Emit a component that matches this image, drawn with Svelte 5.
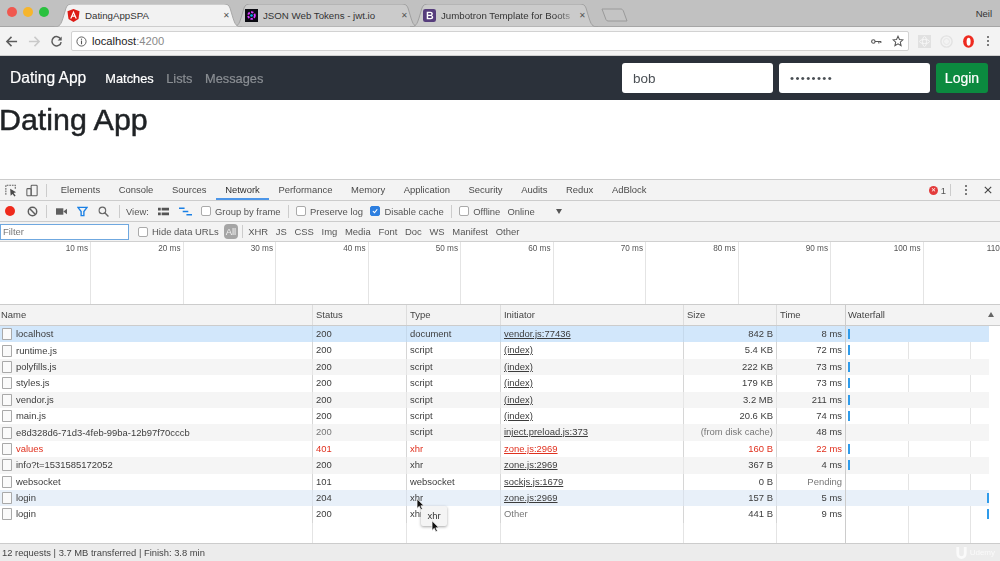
<script>
  const tabs = ['Elements','Console','Sources','Network','Performance','Memory','Application','Security','Audits','Redux','AdBlock'];
  const filters = ['XHR','JS','CSS','Img','Media','Font','Doc','WS','Manifest','Other'];
  const ticks = [10,20,30,40,50,60,70,80,90,100,110];
  const cols = ['Name','Status','Type','Initiator','Size','Time','Waterfall'];
  const rows = [
    {n:'localhost',s:'200',t:'document',i:'vendor.js:77436',z:'842 B',m:'8 ms',bar:'l',c:'sel'},
    {n:'runtime.js',s:'200',t:'script',i:'(index)',z:'5.4 KB',m:'72 ms',bar:'l'},
    {n:'polyfills.js',s:'200',t:'script',i:'(index)',z:'222 KB',m:'73 ms',bar:'l',c:'alt'},
    {n:'styles.js',s:'200',t:'script',i:'(index)',z:'179 KB',m:'73 ms',bar:'l'},
    {n:'vendor.js',s:'200',t:'script',i:'(index)',z:'3.2 MB',m:'211 ms',bar:'l',c:'alt'},
    {n:'main.js',s:'200',t:'script',i:'(index)',z:'20.6 KB',m:'74 ms',bar:'l'},
    {n:'e8d328d6-71d3-4feb-99ba-12b97f70cccb',s:'200',t:'script',i:'inject.preload.js:373',z:'(from disk cache)',m:'48 ms',c:'alt',dimS:true,dimZ:true},
    {n:'values',s:'401',t:'xhr',i:'zone.js:2969',z:'160 B',m:'22 ms',bar:'l',c:'err'},
    {n:'info?t=1531585172052',s:'200',t:'xhr',i:'zone.js:2969',z:'367 B',m:'4 ms',bar:'l',c:'alt'},
    {n:'websocket',s:'101',t:'websocket',i:'sockjs.js:1679',z:'0 B',m:'Pending',dimM:true},
    {n:'login',s:'204',t:'xhr',i:'zone.js:2969',z:'157 B',m:'5 ms',bar:'r',c:'hov'},
    {n:'login',s:'200',t:'xhr',i:'Other',plain:true,z:'441 B',m:'9 ms',bar:'r'}
  ];
</script>

<div class="page">
  <div class="tabstrip">
    <div class="lights">
      <span class="light red"></span><span class="light yellow"></span><span class="light green"></span>
    </div>
    <div class="tab active">
      <svg class="tabshape" viewBox="0 0 188 23" preserveAspectRatio="none"><path d="M0 23 C6 23 7 20 9 14 L12 4 C13 1 15 0 18 0 L170 0 C173 0 175 1 176 4 L179 14 C181 20 182 23 188 23Z" fill="#f2f2f2" stroke="#a8a8a8" stroke-width="1"/></svg>
      <svg class="fav" viewBox="0 0 14 14"><path d="M7 0 L13.5 2.3 L12.4 10.8 L7 14 L1.6 10.8 L.5 2.3Z" fill="#dd1b16"/><path d="M7 2 L3.4 10.2 H4.9 L5.6 8.4 H8.4 L9.1 10.2 H10.6Z M6.2 7.1 L7 5 L7.8 7.1Z" fill="#fff" fill-rule="evenodd"/></svg>
      <span class="tabtitle">DatingAppSPA</span><span class="tabx">✕</span>
    </div>
    <div class="tab">
      <svg class="tabshape" viewBox="0 0 188 23" preserveAspectRatio="none"><path d="M0 23 C6 23 7 20 9 14 L12 4 C13 1 15 0 18 0 L170 0 C173 0 175 1 176 4 L179 14 C181 20 182 23 188 23Z" fill="#cbcbcb" stroke="#a0a0a0" stroke-width="1"/></svg>
      <svg class="fav" viewBox="0 0 14 14"><rect width="14" height="14" fill="#0b0b12"/><circle cx="7" cy="7" r="3.6" fill="none" stroke="#d63aff" stroke-width="2" stroke-dasharray="2.6 1.4"/><circle cx="7" cy="7" r="1.4" fill="#00b9f1"/></svg>
      <span class="tabtitle">JSON Web Tokens - jwt.io</span><span class="tabx">✕</span>
    </div>
    <div class="tab">
      <svg class="tabshape" viewBox="0 0 188 23" preserveAspectRatio="none"><path d="M0 23 C6 23 7 20 9 14 L12 4 C13 1 15 0 18 0 L170 0 C173 0 175 1 176 4 L179 14 C181 20 182 23 188 23Z" fill="#cbcbcb" stroke="#a0a0a0" stroke-width="1"/></svg>
      <svg class="fav" viewBox="0 0 14 14"><rect width="14" height="14" rx="2.5" fill="#563d7c"/><path d="M4 3 H8 C10 3 10.6 4.2 10.6 5 C10.6 6 10 6.6 9.2 6.8 C10.2 7 11 7.7 11 8.9 C11 10.3 9.9 11 8.4 11 H4Z M5.6 4.3 V6.3 H7.6 C8.5 6.3 9 5.9 9 5.3 C9 4.7 8.5 4.3 7.6 4.3Z M5.6 7.5 V9.7 H8 C8.9 9.7 9.4 9.3 9.4 8.6 C9.4 7.9 8.9 7.5 8 7.5Z" fill="#fff" fill-rule="evenodd"/></svg>
      <span class="tabtitle fade">Jumbotron Template for Boots</span><span class="tabx">✕</span>
    </div>
    <svg class="newtab" viewBox="0 0 27 14"><path d="M1 1 H20 C21 1 22 2 22.4 3 L26 13 H7 C6 13 5.4 12.4 5 11.6Z" fill="#c4c4c4" stroke="#9a9a9a"/></svg>
    <span class="spacer"></span>
    <span class="user">Neil</span>
  </div>

  <div class="toolbar">
    <svg class="nav" viewBox="0 0 14 14"><path d="M13 7 H2 M7 2 L2 7 L7 12" fill="none" stroke="#5c5c5c" stroke-width="1.6"/></svg>
    <svg class="nav" viewBox="0 0 14 14"><path d="M1 7 H12 M7 2 L12 7 L7 12" fill="none" stroke="#c9c9c9" stroke-width="1.6"/></svg>
    <svg class="nav" viewBox="0 0 14 14"><path d="M11.6 4.6 A5 5 0 1 0 12 7.6" fill="none" stroke="#5c5c5c" stroke-width="1.6"/><path d="M12.6 1.6 V6 H8.2Z" fill="#5c5c5c"/></svg>
    <div class="omnibox">
      <svg class="info" viewBox="0 0 12 12"><circle cx="6" cy="6" r="5" fill="none" stroke="#555" stroke-width="1"/><rect x="5.4" y="5" width="1.2" height="4" fill="#555"/><rect x="5.4" y="2.9" width="1.2" height="1.2" fill="#555"/></svg>
      <span class="host">localhost</span><span class="port">:4200</span>
      <span class="spacer"></span>
      <svg class="key" viewBox="0 0 14 8"><circle cx="3" cy="4" r="2.2" fill="none" stroke="#555" stroke-width="1.4"/><path d="M5 4 H13 M10 4 V6.5 M12.5 4 V6" stroke="#555" stroke-width="1.4" fill="none"/></svg>
      <svg class="star" viewBox="0 0 14 14"><path d="M7 1.4 L8.7 5.2 L12.8 5.6 L9.7 8.3 L10.6 12.4 L7 10.3 L3.4 12.4 L4.3 8.3 L1.2 5.6 L5.3 5.2Z" fill="none" stroke="#555" stroke-width="1.2"/></svg>
    </div>
    <div class="exts">
      <span class="ext"><svg viewBox="0 0 13 13"><rect width="13" height="13" fill="#e1e1e1"/><ellipse cx="6.5" cy="6.5" rx="5" ry="2" fill="none" stroke="#f7f7f7"/><ellipse cx="6.5" cy="6.5" rx="2" ry="5" fill="none" stroke="#f7f7f7"/></svg></span>
      <span class="ext"><svg viewBox="0 0 13 13"><circle cx="6.5" cy="6.5" r="5.6" fill="none" stroke="#e2e2e2" stroke-width="1.4"/><circle cx="6.5" cy="6.5" r="3" fill="none" stroke="#e6e6e6"/></svg></span>
      <span class="ext"><svg viewBox="0 0 13 13"><ellipse cx="6.5" cy="6.5" rx="5.4" ry="6.2" fill="#ee2b20"/><ellipse cx="6.6" cy="6.8" rx="2" ry="4" fill="#fff"/></svg></span>
      <span class="dots"><i></i><i></i><i></i></span>
    </div>
  </div>

  <nav class="navbar">
    <span class="brand">Dating App</span>
    <span class="link on">Matches</span>
    <span class="link">Lists</span>
    <span class="link">Messages</span>
    <span class="spacer"></span>
    <div class="field">bob</div>
    <div class="field pw">••••••••</div>
    <button class="login">Login</button>
  </nav>

  <main class="content"><h1>Dating App</h1></main>

  <section class="devtools">
    <div class="dt-tabs">
      <svg class="ico first" viewBox="0 0 14 14"><path d="M1 12 V1 H12 V5" fill="none" stroke="#5f5f5f" stroke-width="1.2" stroke-dasharray="2 1"/><path d="M6 5 L13 9 L10 10 L12.4 13 L11 14 L8.8 11 L6.6 13Z" fill="#4a4a4a"/></svg>
      <svg class="ico" viewBox="0 0 14 14"><rect x="6" y=".8" width="7" height="12.4" rx="1" fill="none" stroke="#5f5f5f" stroke-width="1.2"/><rect x="1" y="4.8" width="5" height="8.4" rx="1" fill="none" stroke="#5f5f5f" stroke-width="1.2"/></svg>
      <span class="vsep"></span>
      <div class="tablist">
        {#each tabs as t}<span class="dt-tab" class:cur={t === 'Network'}>{t}</span>{/each}
      </div>
      <span class="spacer"></span>
      <span class="errs"><span class="errdot">✕</span> 1</span>
      <span class="vsep e"></span>
      <span class="vdots"><i></i><i></i><i></i></span>
      <svg class="closex" viewBox="0 0 10 10"><path d="M1 1 L9 9 M9 1 L1 9" stroke="#444" stroke-width="1.4"/></svg>
    </div>

    <div class="dt-tools">
      <span class="rec"></span>
      <svg class="ico2" viewBox="0 0 12 12"><circle cx="6" cy="6" r="4.6" fill="none" stroke="#5f5f5f" stroke-width="1.6"/><path d="M2.8 2.8 L9.2 9.2" stroke="#5f5f5f" stroke-width="1.6"/></svg>
      <span class="vsep t1"></span>
      <svg class="ico2 cam" viewBox="0 0 12 10"><rect y="1.5" width="8" height="7" fill="#5f5f5f"/><path d="M8 5 L12 2 V8Z" fill="#5f5f5f"/></svg>
      <svg class="ico2 fil" viewBox="0 0 12 12"><path d="M1 1.5 H11 L7.5 6 V10.5 H4.5 V6Z" fill="none" stroke="#1a80e5" stroke-width="1.5"/></svg>
      <svg class="ico2 mag" viewBox="0 0 12 12"><circle cx="4.8" cy="4.8" r="3.6" fill="none" stroke="#666" stroke-width="1.2"/><path d="M7.4 7.4 L11.4 11.4" stroke="#666" stroke-width="1.5"/></svg>
      <span class="vsep t2"></span>
      <span class="lbl">View:</span>
      <svg class="ico2 lst" viewBox="0 0 12 10"><path d="M0 1h3v3H0z M4 1h8v3H4z M0 6h3v3H0z M4 6h8v3H4z" fill="#555"/></svg>
      <svg class="ico2 wf" viewBox="0 0 14 10"><path d="M0 1.5 H6 M4 5 H10 M8 8.5 H14" stroke="#1a80e5" stroke-width="1.8"/></svg>
      <span class="chk"></span><span class="lbl">Group by frame</span>
      <span class="vsep t3"></span>
      <span class="chk"></span><span class="lbl">Preserve log</span>
      <span class="chk on"><svg viewBox="0 0 10 10"><path d="M2.4 5.2 L4.4 7.2 L7.8 2.8" fill="none" stroke="#fff" stroke-width="1.4"/></svg></span><span class="lbl">Disable cache</span>
      <span class="vsep t3"></span>
      <span class="chk"></span><span class="lbl">Offline</span>
      <span class="lbl online">Online</span>
      <span class="caret"></span>
    </div>

    <div class="dt-filter">
      <div class="filter">Filter</div>
      <span class="chk"></span><span class="lbl">Hide data URLs</span>
      <span class="allbtn">All</span>
      <span class="vsep f"></span>
      <div class="types">{#each filters as f}<span>{f}</span>{/each}</div>
    </div>

    <div class="overview">
      {#each ticks as t}<div class="tick">{t} ms</div>{/each}
    </div>

    <div class="grid-head">
      {#each cols as c, i}<div class="h h{i}">{c}{#if i === 6}<span class="sort"></span>{/if}</div>{/each}
    </div>

    <div class="rows">
      <div class="rowlist">
        {#each rows as r}
          <div class="row {r.c ?? ''}">
            <div class="cell c0"><svg class="file" viewBox="0 0 10 12"><path d="M.5 .5 H9.5 V11.5 H.5Z" fill="#fafafa" stroke="#a9a9a9"/></svg>{r.n}</div>
            <div class="cell c1" class:dim={r.dimS}>{r.s}</div>
            <div class="cell c2">{r.t}</div>
            <div class="cell c3"><span class:u={!r.plain} class:dim={r.plain}>{r.i}</span></div>
            <div class="cell c4" class:dim={r.dimZ}>{r.z}</div>
            <div class="cell c5" class:dim={r.dimM}>{r.m}</div>
            <div class="cell c6">{#if r.bar}<span class="bar {r.bar}"></span>{/if}</div>
          </div>
        {/each}
      </div>
      <div class="tooltip">xhr</div>
      <svg class="cursor one" viewBox="0 0 10 15"><path d="M1 1 V12 L3.6 9.6 L5.4 13.6 L7.2 12.8 L5.4 9 H9Z" fill="#111" stroke="#fff" stroke-width=".8"/></svg>
      <svg class="cursor two" viewBox="0 0 10 15"><path d="M1 1 V12 L3.6 9.6 L5.4 13.6 L7.2 12.8 L5.4 9 H9Z" fill="#111" stroke="#fff" stroke-width=".8"/></svg>
    </div>

    <footer class="status">
      <span>12 requests | 3.7 MB transferred | Finish: 3.8 min</span>
      <span class="udemy"><svg viewBox="0 0 14 14"><path d="M3 1 V8 C3 11 5 12.5 7 12.5 C9 12.5 11 11 11 8 V1" fill="none" stroke="#fafafa" stroke-width="3"/></svg>Udemy</span>
    </footer>
  </section>
</div>

<style>
  :global(body) { margin: 0; background: #fff; }
  .page { width: 1000px; height: 561px; overflow: hidden; display: flex; flex-direction: column; font-family: "Liberation Sans", Arial, sans-serif; color: #303030; filter: blur(.3px); }
  .spacer { flex: 1; }

  .tabstrip { height: 27px; box-sizing: border-box; background: #c1c1c1; border-bottom: 1px solid #a6a6a6; display: flex; align-items: flex-end; flex: none; }
  .lights { display: flex; gap: 6px; padding: 0 0 9px 7px; width: 54px; box-sizing: border-box; flex: none; }
  .light { width: 10px; height: 10px; border-radius: 50%; flex: none; }
  .red { background: #f0584f; } .yellow { background: #f6b52c; } .green { background: #2ac13f; }
  .tab { position: relative; width: 188px; height: 23px; margin-right: -10px; display: flex; align-items: center; padding: 0 11px 0 13px; box-sizing: border-box; margin-bottom: -1px; font-size: 9.7px; flex: none; }
  .tab.active { z-index: 2; }
  .tabshape { position: absolute; inset: 0; width: 100%; height: 100%; }
  .fav { position: relative; width: 13px; height: 13px; flex: none; margin-right: 5px; }
  .tabtitle { position: relative; flex: 1; white-space: nowrap; overflow: hidden; color: #333; }
  .tabtitle.fade { -webkit-mask-image: linear-gradient(90deg, #000 85%, transparent); mask-image: linear-gradient(90deg, #000 85%, transparent); }
  .tabx { position: relative; font-size: 8px; color: #555; width: 10px; text-align: center; flex: none; }
  .newtab { width: 27px; height: 14px; margin: 0 0 4px 13px; flex: none; }
  .user { align-self: center; font-size: 9.5px; color: #333; margin-right: 8px; }

  .toolbar { height: 29px; box-sizing: border-box; background: #f3f3f3; border-bottom: 1px solid #cfcfcf; display: flex; align-items: center; flex: none; padding-left: 5px; }
  .nav { width: 13px; height: 13px; margin-right: 9.5px; flex: none; }
  .omnibox { width: 838px; flex: none; margin-left: -1.5px; height: 20px; box-sizing: border-box; background: #fff; border: 1px solid #d2d2d2; border-radius: 2px; display: flex; align-items: center; padding: 0 4px 0 4px; font-size: 11.2px; }
  .info { width: 11px; height: 11px; margin-right: 5px; }
  .host { color: #222; } .port { color: #8a8a8a; }
  .key { width: 11px; height: 7px; margin-right: 10px; }
  .star { width: 12px; height: 12px; }
  .exts { display: flex; align-items: center; margin-left: 9px; gap: 9px; }
  .ext { width: 13px; height: 13px; display: block; }
  .ext svg { width: 13px; height: 13px; display: block; }
  .dots { display: flex; flex-direction: column; gap: 2px; margin-left: 3px; }
  .dots i, .vdots i { display: block; width: 2px; height: 2px; border-radius: 50%; background: #555; }

  .navbar { height: 44px; background: #2b313a; display: flex; align-items: center; flex: none; padding: 0 12px 0 10px; box-sizing: border-box; }
  .brand { color: #fff; font-size: 15.6px; margin-right: 19px; -webkit-text-stroke: .2px #fff; }
  .link { color: #8a8e93; font-size: 12.8px; margin-right: 12.5px; -webkit-text-stroke: .2px; }
  .link.on { color: #fff; }
  .field { width: 150.5px; height: 30px; box-sizing: border-box; background: #fff; border-radius: 3px; font-size: 13.5px; color: #4a4f54; padding: 0 11px; display: flex; align-items: center; margin-right: 6.5px; }
  .pw { font-size: 11.5px; letter-spacing: 1.35px; }
  .login { width: 52px; height: 30px; background: #0b8a3f; color: #fff; border: 0; border-radius: 3px; font: 14px "Liberation Sans", Arial, sans-serif; padding: 0; -webkit-text-stroke: .2px #fff; }

  .content { height: 79px; flex: none; }
  h1 { margin: 0 0 0 -1px; font-size: 30.4px; font-weight: 400; line-height: 38px; color: #1f2225; -webkit-text-stroke: .5px #1f2225; }

  .devtools { flex: 1; min-height: 0; display: flex; flex-direction: column; border-top: 1px solid #ccc; font-size: 9.45px; }
  .dt-tabs { height: 21px; box-sizing: border-box; background: #f3f3f3; border-bottom: 1px solid #ccc; display: flex; align-items: center; flex: none; padding-left: 5px; }
  .ico { width: 12px; height: 13px; margin-right: 8px; }
  .ico.first { margin-right: 9px; }
  .vsep { width: 1px; height: 13px; background: #ccc; flex: none; }
  .tablist { display: flex; height: 100%; margin-left: 4.5px; }
  .dt-tab { padding: 0 9.3px 1px; display: flex; align-items: center; color: #4a4a4a; box-sizing: border-box; height: 20px; }
  .dt-tab.cur { color: #303030; box-shadow: inset 0 -2px 0 #4d96e8; }
  .errs { color: #555; display: flex; align-items: center; gap: 3px; margin-right: 4px; }
  .errdot { width: 9px; height: 9px; border-radius: 50%; background: #e33b3b; color: #fff; font-size: 6px; line-height: 9px; text-align: center; display: block; }
  .vsep.e { height: 12px; margin-right: 14px; }
  .vdots { display: flex; flex-direction: column; gap: 2px; margin-right: 17px; }
  .closex { width: 8px; height: 8px; margin-right: 8px; }

  .dt-tools { height: 21px; box-sizing: border-box; background: #f3f3f3; border-bottom: 1px solid #ccc; display: flex; align-items: center; flex: none; padding-left: 5px; color: #555; }
  .rec { width: 10px; height: 10px; border-radius: 50%; background: #ef2b1d; margin-right: 12px; flex: none; }
  .ico2 { width: 11px; height: 11px; flex: none; }
  .vsep.t1 { margin: 0 9px 0 8px; }
  .vsep.t2 { margin: 0 6px 0 10px; }
  .vsep.t3 { margin: 0 7px 0 7.5px; }
  .cam { margin-right: 10px; }
  .fil { margin-right: 10px; }
  .lbl { white-space: nowrap; color: #555; }
  .lst { margin: 0 10px 0 9px; }
  .wf { margin-right: 9px; width: 13px; }
  .chk { width: 10px; height: 10px; border: 1px solid #aaa; border-radius: 2px; background: #fff; margin-right: 4px; flex: none; display: block; box-sizing: border-box; }
  .chk.on { background: #2d7fe0; border-color: #2d7fe0; margin-left: 7.5px; }
  .chk.on svg { display: block; width: 8px; height: 8px; }
  .lbl.online { margin-left: 7px; }
  .caret { width: 0; height: 0; border: 3.5px solid transparent; border-top: 5px solid #555; border-bottom: 0; margin-left: 21px; }

  .dt-filter { height: 20px; box-sizing: border-box; background: #f3f3f3; border-bottom: 1px solid #d0d0d0; display: flex; align-items: center; flex: none; color: #555; }
  .filter { width: 129px; height: 16px; box-sizing: border-box; border: 1px solid #6fa8e0; background: #fff; padding-left: 2px; line-height: 14px; color: #777; margin-right: 9px; }
  .allbtn { background: #a5a5a5; color: #f3f3f3; border-radius: 4px; padding: 2px 2px; margin-left: 5px; line-height: 11px; }
  .vsep.f { margin: 0 5px 0 4px; height: 13px; }
  .types { display: flex; gap: 7.7px; color: #555; }

  .overview { height: 63px; flex: none; display: flex; border-bottom: 1px solid #ccc; box-sizing: border-box; overflow: hidden; background: #fff; }
  .tick { width: 92.5px; flex: none; box-sizing: border-box; border-right: 1px solid #e4e4e4; text-align: right; padding: 2px 2px 0 0; font-size: 8.2px; color: #555; white-space: nowrap; }
  .tick:first-child { width: 91px; }

  .grid-head { height: 21px; flex: none; display: flex; background: #f3f3f3; border-bottom: 1px solid #ccc; box-sizing: border-box; color: #444; }
  .h { box-sizing: border-box; border-right: 1px solid #ddd; padding-left: 1px; line-height: 19px; flex: none; position: relative; }
  .h1,.h2,.h3,.h4,.h5 { padding-left: 3px; }
  .h6 { padding-left: 2px; flex: 1; border-right: 0; }
  .h0 { width: 313px; } .h1 { width: 94px; } .h2 { width: 94px; } .h3 { width: 183px; } .h4 { width: 93px; } .h5 { width: 69px; border-right: 1px solid #ccc; }
  .sort { position: absolute; right: 6px; top: 7px; width: 0; height: 0; border: 3.5px solid transparent; border-bottom: 5px solid #666; border-top: 0; }

  .rows { flex: 1; min-height: 0; position: relative; overflow: hidden; background:
    linear-gradient(#e4e4e4,#e4e4e4) 312px 0/1px 100% no-repeat,
    linear-gradient(#e4e4e4,#e4e4e4) 406px 0/1px 100% no-repeat,
    linear-gradient(#e4e4e4,#e4e4e4) 500px 0/1px 100% no-repeat,
    linear-gradient(#e4e4e4,#e4e4e4) 683px 0/1px 100% no-repeat,
    linear-gradient(#e4e4e4,#e4e4e4) 776px 0/1px 100% no-repeat,
    linear-gradient(#ccc,#ccc) 845px 0/1px 100% no-repeat,
    linear-gradient(#e4e4e4,#e4e4e4) 908px 0/1px 100% no-repeat,
    linear-gradient(#e4e4e4,#e4e4e4) 970px 0/1px 100% no-repeat,
    #fff; }
  .rowlist { width: 989px; }
  .row { height: 16.4px; display: flex; align-items: center; color: #3c3c3c; line-height: 16px; box-sizing: border-box; }
  .row.sel { background: #d2e7fb; }
  .row.alt { background: #f5f5f5; }
  .row.hov { background: #e8f0f9; }
  .row.err { color: #e0301e; }
  .row.err .u { color: #e0301e; }
  .cell { flex: none; box-sizing: border-box; padding-left: 3px; white-space: nowrap; overflow: hidden; height: 100%; border-right: 1px solid rgba(0,0,0,.06); }
  .c0 { width: 313px; padding-left: 2px; display: flex; align-items: center; }
  .c1 { width: 94px; } .c2 { width: 94px; } .c3 { width: 183px; }
  .c4 { width: 93px; text-align: right; padding-right: 3px; }
  .c5 { width: 69px; text-align: right; padding-right: 3px; border-right: 1px solid #ccc; }
  .c6 { flex: 1; position: relative; border-right: 0; }
  .file { width: 10px; height: 12px; margin-right: 4px; flex: none; }
  .u { text-decoration: underline; }
  .dim { color: #777; }
  .bar { position: absolute; top: 3px; width: 2px; height: 10px; background: #2f9bea; }
  .bar.l { left: 2px; }
  .bar.r { right: 0; }
  .tooltip { position: absolute; left: 421px; top: 180px; width: 26px; height: 20px; background: #f4f4f4; border-radius: 2px; box-shadow: 0 1px 3px rgba(0,0,0,.35); text-align: center; line-height: 19px; color: #333; }
  .cursor { position: absolute; width: 9px; height: 13px; }
  .cursor.one { left: 415.5px; top: 172px; }
  .cursor.two { left: 430.5px; top: 194px; }

  .status { height: 18px; flex: none; box-sizing: border-box; background: #ececec; border-top: 1px solid #ccc; padding: 0 2px; line-height: 18px; display: flex; justify-content: space-between; color: #444; font-size: 9.4px; }
  .udemy { color: #fafafa; font-size: 8px; padding-right: 3px; display: flex; align-items: center; gap: 2px; }
  .udemy svg { width: 13px; height: 13px; }
</style>
